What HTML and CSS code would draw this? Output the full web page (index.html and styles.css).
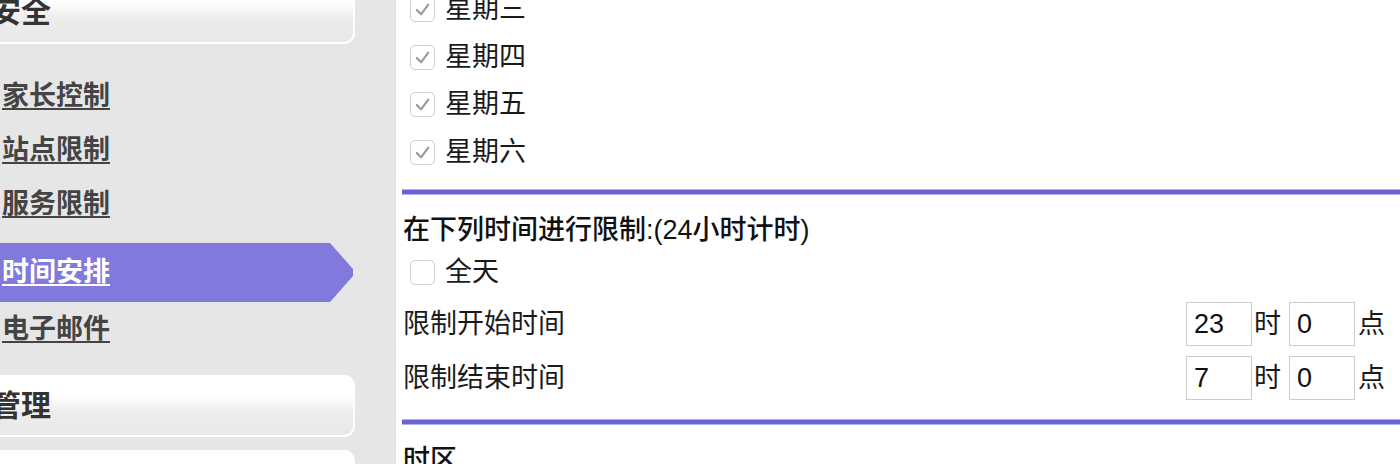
FILE: index.html
```html
<!DOCTYPE html>
<html lang="zh-CN">
<head>
<meta charset="utf-8">
<title>时间安排</title>
<link rel="stylesheet" href="styles.css">
</head>
<body>
<div class="page">
  <aside class="sidebar">
    <div class="card card-first"><span class="card-title">安全</span></div>
    <ul class="nav">
      <li class="nav-item"><a href="#">家长控制</a></li>
      <li class="nav-item"><a href="#">站点限制</a></li>
      <li class="nav-item"><a href="#">服务限制</a></li>
      <li class="nav-item active"><a href="#">时间安排</a></li>
      <li class="nav-item"><a href="#">电子邮件</a></li>
    </ul>
    <div class="card card-mid"><span class="card-title">管理</span></div>
    <div class="card card-next"></div>
  </aside>
  <main class="main">
    <div class="days">
      <label class="check-row"><span class="box checked"><svg viewBox="0 0 24 24" width="24" height="24"><path d="M6 12.5 L10.5 17 L18 7" fill="none" stroke="#9a9a9a" stroke-width="2.2" stroke-linecap="round" stroke-linejoin="round"/></svg></span><span>星期三</span></label>
      <label class="check-row"><span class="box checked"><svg viewBox="0 0 24 24" width="24" height="24"><path d="M6 12.5 L10.5 17 L18 7" fill="none" stroke="#9a9a9a" stroke-width="2.2" stroke-linecap="round" stroke-linejoin="round"/></svg></span><span>星期四</span></label>
      <label class="check-row"><span class="box checked"><svg viewBox="0 0 24 24" width="24" height="24"><path d="M6 12.5 L10.5 17 L18 7" fill="none" stroke="#9a9a9a" stroke-width="2.2" stroke-linecap="round" stroke-linejoin="round"/></svg></span><span>星期五</span></label>
      <label class="check-row"><span class="box checked"><svg viewBox="0 0 24 24" width="24" height="24"><path d="M6 12.5 L10.5 17 L18 7" fill="none" stroke="#9a9a9a" stroke-width="2.2" stroke-linecap="round" stroke-linejoin="round"/></svg></span><span>星期六</span></label>
    </div>
    <div class="rule"></div>
    <div class="section-title">在下列时间进行限制:(24小时计时)</div>
    <label class="check-row allday"><span class="box"></span><span>全天</span></label>
    <div class="time-row">
      <span class="time-label">限制开始时间</span>
      <span class="time-fields">
        <input class="time-input" type="text" value="23"><span class="unit">时</span>
        <input class="time-input" type="text" value="0"><span class="unit unit-last">点</span>
      </span>
    </div>
    <div class="time-row">
      <span class="time-label">限制结束时间</span>
      <span class="time-fields">
        <input class="time-input" type="text" value="7"><span class="unit">时</span>
        <input class="time-input" type="text" value="0"><span class="unit unit-last">点</span>
      </span>
    </div>
    <div class="rule rule-second"></div>
    <div class="section-title">时区</div>
  </main>
</div>
</body>
</html>
```
FILE: styles.css
```css
* { box-sizing: border-box; }

html, body {
  margin: 0;
  padding: 0;
  background: #ffffff;
  overflow: hidden;
}

body {
  font-family: "Liberation Sans", "Noto Sans CJK SC", sans-serif;
  color: #1a1a1a;
  height: 464px;
}

.page {
  display: flex;
  height: 464px;
  overflow: hidden;
}

/* ---------- sidebar ---------- */
.sidebar {
  width: 396px;
  flex: 0 0 396px;
  background: #e6e6e6;
  border-right: 1px solid #dedede;
  display: flex;
  flex-direction: column;
}

.sidebar > * {
  flex-shrink: 0;
}

.card {
  width: 364px;
  margin-left: -9px;
  border: 2px solid #ffffff;
  border-left: none;
  border-radius: 0 11px 11px 0;
  background: linear-gradient(#ffffff 0%, #ffffff 33%, #ededed 60%, #e8e8e8 100%);
  display: flex;
  align-items: center;
}

.card-first {
  height: 64px;
  margin-top: -20px;
}

.card-mid {
  height: 62px;
  margin-top: 19px;
}

.card-next {
  height: 62px;
  margin-top: 13px;
}

.card-title {
  font-size: 30px;
  font-weight: bold;
  color: #333333;
  line-height: 1;
}

.nav {
  list-style: none;
  margin: 25px 0 0 0;
  padding: 0;
}

.nav-item {
  height: 54px;
  display: flex;
  align-items: center;
  padding-left: 2px;
}

.nav-item a {
  font-size: 27px;
  font-weight: bold;
  color: #444444;
  text-decoration: underline;
  text-decoration-thickness: 2px;
  text-underline-offset: 3px;
  line-height: 1;
}

.nav-item.active {
  height: 59px;
  margin-top: 12px;
  width: 353px;
  background: #8279dc;
  clip-path: polygon(0 0, 330px 0, 353px 44%, 353px 56%, 330px 100%, 0 100%);
}

.nav-item.active a {
  color: #ffffff;
}

/* ---------- main ---------- */
.main {
  flex: 1;
  display: flex;
  flex-direction: column;
  font-size: 27px;
  color: #1a1a1a;
}

.main > * {
  flex-shrink: 0;
}

.days {
  margin-top: -14px;
}

.check-row {
  display: flex;
  align-items: center;
  height: 47.5px;
  padding-left: 14px;
  line-height: 1;
}

.box {
  width: 25px;
  height: 25px;
  border: 1.5px solid #cfcfcf;
  border-radius: 5px;
  background: #ffffff;
  margin-right: 10px;
  display: flex;
  align-items: center;
  justify-content: center;
  flex: 0 0 auto;
}

.box svg {
  display: block;
  width: 23px;
  height: 23px;
}

.rule {
  height: 4px;
  margin-top: 14px;
  margin-left: 6px;
  background: #6a61d7;
  box-shadow: 0 1px 0 #b3aeee, 0 -1px 0 #b3aeee;
}

.rule-second {
  margin-top: 15px;
}

.section-title {
  padding-top: 18px;
  padding-left: 7px;
  line-height: 36px;
  height: 54px;
  font-weight: 500;
  color: #111111;
}

.allday {
  height: 49px;
}

.time-row {
  height: 54px;
  display: flex;
  align-items: center;
  justify-content: space-between;
  padding-left: 7px;
  padding-right: 15px;
}

.time-label {
  line-height: 1;
}

.time-fields {
  display: flex;
  align-items: center;
}

.time-input {
  width: 66px;
  height: 44px;
  border: 1px solid #cccccc;
  border-radius: 0;
  padding: 0 0 0 7px;
  margin: 0;
  font-family: "Liberation Sans", "Noto Sans CJK SC", sans-serif;
  font-size: 27px;
  color: #111111;
  background: #ffffff;
  outline: none;
}

.unit {
  margin-left: 2px;
  margin-right: 8px;
  line-height: 1;
}

.unit-last {
  margin-right: 0;
  margin-left: 3px;
}
```
